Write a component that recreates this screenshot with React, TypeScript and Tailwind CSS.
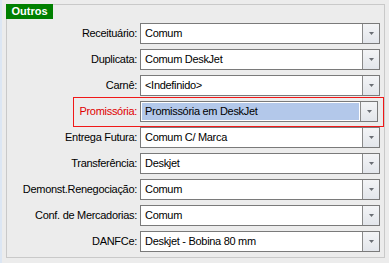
import React from "react";

type Row = { label: string; value: string; active?: boolean };

const rows: Row[] = [
  { label: "Receituário:", value: "Comum" },
  { label: "Duplicata:", value: "Comum DeskJet" },
  { label: "Carnê:", value: "<Indefinido>" },
  { label: "Promissória:", value: "Promissória em DeskJet", active: true },
  { label: "Entrega Futura:", value: "Comum C/ Marca" },
  { label: "Transferência:", value: "Deskjet" },
  { label: "Demonst.Renegociação:", value: "Comum" },
  { label: "Conf. de Mercadorias:", value: "Comum" },
  { label: "DANFCe:", value: "Deskjet - Bobina 80 mm" },
];

const Combo = ({ value, active }: { value: string; active?: boolean }) => (
  <div
    className={`flex h-[21px] border border-[#7a7a7a] bg-white ${
      active ? "w-[238px]" : "w-[240px]"
    }`}
  >
    <div className="flex min-w-0 flex-1 items-center p-[1px]">
      <span
        className={`flex h-full flex-1 items-center pl-[3px] leading-none ${
          active ? "bg-[#b3c8ea]" : ""
        }`}
      >
        {value}
      </span>
    </div>
    <div className="flex w-[17px] items-center justify-center border-l border-[#8a8a8a] bg-gradient-to-b from-[#f3f4f6] to-[#e3e6eb]">
      <svg width="5" height="3" viewBox="0 0 5 3">
        <path d="M0 0H5L2.5 3Z" fill="#6a6e74" />
      </svg>
    </div>
  </div>
);

export default function App() {
  return (
    <div
      className="flex h-[263px] w-[389px] bg-[#ececec] text-[11px] tracking-[-0.3px] text-black"
      style={{ fontFamily: '"Liberation Sans", Arial, sans-serif' }}
    >
      <div className="w-[2px] bg-[#dce6f3]" />
      <div className="ml-[4px] mt-[4px] flex h-[254px] w-[379px] flex-col border border-[#c9c9c9]">
        <div className="-ml-px -mt-px flex h-[15px] w-[47px] items-center justify-center bg-[#008000] text-[11px] font-bold tracking-normal text-white">
          Outros
        </div>
        <div className="mt-[4px] flex flex-col gap-[5px]">
          {rows.map((r) => (
            <div key={r.label} className="relative flex items-center">
              {r.active && (
                <span className="absolute -top-[4px] left-[66px] h-[30px] w-[311px] border border-[#f01818]" />
              )}
              <span
                className={`w-[130px] whitespace-nowrap text-right ${
                  r.active ? "text-[#e00000]" : ""
                }`}
              >
                {r.label}
              </span>
              <div className="ml-[3px]">
                <Combo value={r.value} active={r.active} />
              </div>
            </div>
          ))}
        </div>
      </div>
    </div>
  );
}
